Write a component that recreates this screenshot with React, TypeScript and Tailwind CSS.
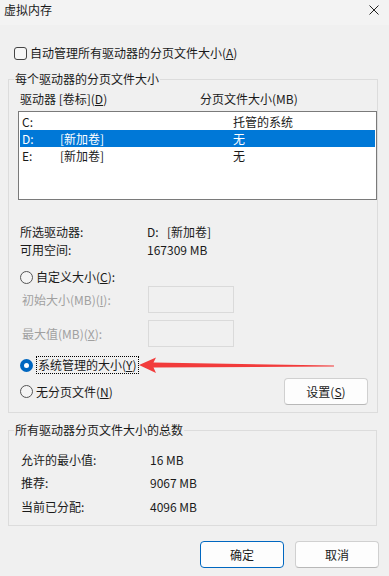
import React from 'react';

const font = { fontFamily: '"Noto Sans CJK SC", "Microsoft YaHei", sans-serif' };

function Radio({ checked }: { checked?: boolean }) {
  return checked ? (
    <span className="w-[13px] h-[13px] rounded-full bg-[#0067c0] flex items-center justify-center shrink-0">
      <span className="w-[5px] h-[5px] rounded-full bg-white" />
    </span>
  ) : (
    <span className="w-[13px] h-[13px] rounded-full border border-[#555] bg-[#f4f4f4] shrink-0" />
  );
}

export default function App() {
  return (
    <div
      className="relative w-[389px] h-[576px] bg-[#f0f0f0] text-[12px] leading-[16px] text-[#1a1a1a] flex flex-col overflow-hidden"
      style={font}
    >
      {/* Title bar */}
      <div className="h-[25px] bg-[#f3f3f3] pt-[2px] flex justify-between pl-[4px] pr-[10px]">
        <span className="h-[16px]">虚拟内存</span>
        <svg width="10" height="10" viewBox="0 0 10 10" className="mt-[3px]">
          <path d="M0.5 0.5 L9.5 9.5 M9.5 0.5 L0.5 9.5" stroke="#222" strokeWidth="1" fill="none" />
        </svg>
      </div>

      {/* Auto manage checkbox */}
      <div className="mt-[20px] ml-[14px] h-[16px] flex items-center">
        <span className="w-[13px] h-[13px] rounded-[3px] border border-[#444] bg-[#f6f6f6]" />
        <span className="ml-[3px]">
          自动管理所有驱动器的分页文件大小(<u>A</u>)
        </span>
      </div>

      {/* Per-drive group */}
      <fieldset className="mt-[10px] ml-[8px] w-[369px] border border-[#dcdcdc] pb-[7px]">
        <legend className="ml-[5px] px-[1px] h-[16px] leading-[16px]">每个驱动器的分页文件大小</legend>

        <div className="mt-[4px] ml-[11px] h-[16px] flex">
          <span className="w-[180px]">
            驱动器 [卷标](<u>D</u>)
          </span>
          <span>分页文件大小(MB)</span>
        </div>

        <div className="mt-[4px] ml-[9px] w-[359px] h-[89px] border border-[#7a7a7a] bg-white p-[1px]">
          {[
            { d: 'C:', label: '', size: '托管的系统', sel: false },
            { d: 'D:', label: '[新加卷]', size: '无', sel: true },
            { d: 'E:', label: '[新加卷]', size: '无', sel: false },
          ].map((r) => (
            <div
              key={r.d}
              className={`h-[17px] flex items-center pl-[2px] ${r.sel ? 'bg-[#0078d7] text-white' : ''}`}
            >
              <span className="w-[38px]">{r.d}</span>
              <span className="w-[173px]">{r.label}</span>
              <span>{r.size}</span>
            </div>
          ))}
        </div>

        <div className="mt-[23px] ml-[11px] h-[18px] flex items-center">
          <span className="w-[127px]">所选驱动器:</span>
          <span className="w-[20px]">D:</span>
          <span>[新加卷]</span>
        </div>
        <div className="ml-[11px] h-[18px] flex items-center">
          <span className="w-[127px]">可用空间:</span>
          <span>167309 MB</span>
        </div>

        <div className="mt-[9px] ml-[11px] h-[18px] flex items-center">
          <Radio />
          <span className="ml-[3px]">
            自定义大小(<u>C</u>):
          </span>
        </div>

        <div className="ml-[13px] h-[27px] flex items-center text-[#a0a0a0]">
          <span className="w-[126px]">
            初始大小(MB)(<u>I</u>):
          </span>
          <span className="w-[86px] h-[27px] border border-[#dadada] bg-[#f0f0f0]" />
        </div>
        <div className="mt-[7px] ml-[13px] h-[27px] flex items-center text-[#a0a0a0]">
          <span className="w-[126px]">
            最大值(MB)(<u>X</u>):
          </span>
          <span className="w-[86px] h-[27px] border border-[#dadada] bg-[#f0f0f0]" />
        </div>

        <div className="mt-[9px] ml-[11px] h-[18px] flex items-center">
          <Radio checked />
          <span className="ml-[3px] h-[18px] px-[1px] border border-dotted border-black flex items-center">
            系统管理的大小(<u>Y</u>)
          </span>
        </div>

        <div className="mt-[4px] ml-[11px] mr-[9px] h-[27px] flex items-center justify-between">
          <div className="flex items-center">
            <Radio />
            <span className="ml-[3px]">
              无分页文件(<u>N</u>)
            </span>
          </div>
          <button className="w-[84px] h-[27px] rounded-[4px] border border-[#d0d0d0] border-b-[#b8b8b8] bg-[#fdfdfd] flex items-center justify-center">
            设置(<u>S</u>)
          </button>
        </div>
      </fieldset>

      {/* Totals group */}
      <fieldset className="mt-[9px] ml-[8px] w-[369px] border border-[#dcdcdc] pb-[9px]">
        <legend className="ml-[5px] px-[1px] h-[16px] leading-[16px]">所有驱动器分页文件大小的总数</legend>
        <div className="mt-[13px] ml-[12px] h-[18px] flex items-center">
          <span className="w-[129px]">允许的最小值:</span>
          <span>16 MB</span>
        </div>
        <div className="mt-[5px] ml-[12px] h-[18px] flex items-center">
          <span className="w-[129px]">推荐:</span>
          <span>9067 MB</span>
        </div>
        <div className="mt-[6px] ml-[12px] h-[18px] flex items-center">
          <span className="w-[129px]">当前已分配:</span>
          <span>4096 MB</span>
        </div>
      </fieldset>

      {/* Dialog buttons */}
      <div className="mt-[15px] pr-[10px] flex justify-end gap-[11px]">
        <button className="w-[84px] h-[27px] rounded-[4px] border border-[#0067c0] bg-[#fdfdfd] flex items-center justify-center">
          确定
        </button>
        <button className="w-[84px] h-[27px] rounded-[4px] border border-[#d0d0d0] border-b-[#b8b8b8] bg-[#fdfdfd] flex items-center justify-center">
          取消
        </button>
      </div>

      {/* Red annotation arrow */}
      <svg className="absolute left-[138px] top-[355px]" width="198" height="22" viewBox="0 0 198 22">
        <polygon
          points="1,10 18,2.5 15.5,7.6 196,10.5 196,11.5 15.5,12.6 18,18"
          fill="#f23b3b"
        />
      </svg>
    </div>
  );
}
